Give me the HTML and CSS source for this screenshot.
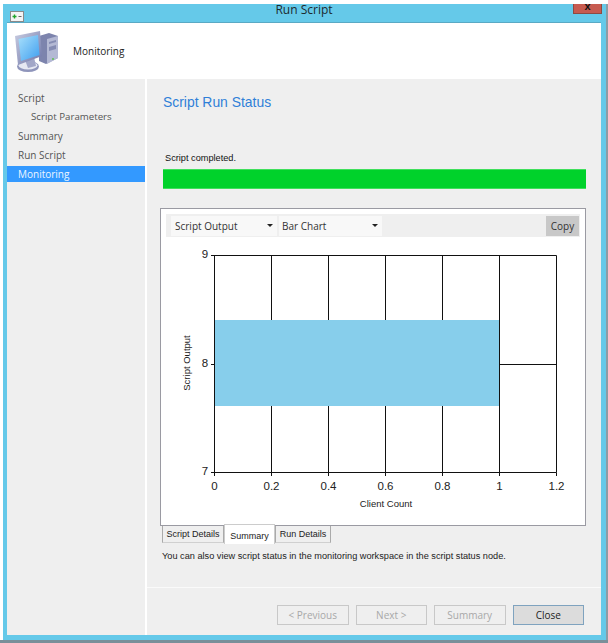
FILE: index.html

```html
<!DOCTYPE html>
<html lang="en">
<head>
  <meta charset="UTF-8">
  <title>Run Script</title>
  <link rel="stylesheet" href="styles.css">
</head>
<body>
  <div class="window">
    <div class="titlebar">
      <span class="app-icon">
        <svg width="14" height="11" viewBox="0 0 14 11">
          <rect x="0.5" y="0.5" width="13" height="10" fill="#f4f4f4" stroke="#8a8a8a"/>
          <path d="M2.500 5.500h4M4.500 3.500v4" stroke="#1fa52b" stroke-width="1.400"/>
          <path d="M8.500 5.500h3" stroke="#666" stroke-width="1"/>
        </svg>
      </span>
      <span class="title">Run Script</span>
      <span class="close-btn">x</span>
    </div>

    <div class="header">
      <svg class="computer" width="45" height="44" viewBox="0 0 45 44">
        <defs>
          <linearGradient id="screen" x1="0" y1="0" x2="1" y2="1">
            <stop offset="0" stop-color="#a9e0fb"/>
            <stop offset="1" stop-color="#3f9ff0"/>
          </linearGradient>
          <linearGradient id="bezel" x1="0" y1="0" x2="1" y2="1">
            <stop offset="0" stop-color="#c9cde2"/>
            <stop offset="1" stop-color="#6d74a6"/>
          </linearGradient>
        </defs>
        <path d="M24 6l10-3 9 3v22l-12 6-7-3z" fill="#7d84ad"/>
        <path d="M32 9l11-3v22l-11 6z" fill="#b4b9d4"/>
        <path d="M34 12l7-2v2l-7 2zM34 17l7-2v4l-7 2z" fill="#858cb3"/>
        <circle cx="38" cy="29" r="1" fill="#5cc04f"/>
        <ellipse cx="13" cy="36.500" rx="11" ry="5.500" fill="#8f95bb"/>
        <ellipse cx="13" cy="35.500" rx="9.500" ry="4" fill="#e6e8f2"/>
        <path d="M10 30l9-3 2 9-8 2z" fill="#a2a7c8"/>
        <path d="M0 6L25 1l2 25-24 9z" fill="url(#bezel)"/>
        <path d="M3.500 9L23 5l1.500 20L6 31z" fill="url(#screen)"/>
      </svg>
      <span class="header-text">Monitoring</span>
    </div>

    <div class="body-row">
      <nav class="sidebar">
        <div class="nav-item">Script</div>
        <div class="nav-item sub">Script Parameters</div>
        <div class="nav-item">Summary</div>
        <div class="nav-item">Run Script</div>
        <div class="nav-item active">Monitoring</div>
      </nav>

      <div class="main">
        <div class="content">
          <h1>Script Run Status</h1>
          <p class="status">Script completed.</p>
          <div class="progress"></div>

          <div class="panel">
            <div class="toolbar">
              <div class="select s1"><span>Script Output</span><i class="arrow"></i></div>
              <div class="select s2"><span>Bar Chart</span><i class="arrow"></i></div>
              <div class="copy">Copy</div>
            </div>
            <svg class="chart" width="423" height="285" viewBox="161 239 423 285">
              <rect x="214" y="320" width="285.500" height="86" fill="#87ceeb"/>
              <g stroke="#111" stroke-width="1" fill="none">
                <path d="M214.500 255.500V472.500M271.500 255.500V320M328.500 255.500V320M385.500 255.500V320M442.500 255.500V320M499.500 255.500V472.500M556.500 255.500V472.500"/>
                <path d="M271.500 406V472.500M328.500 406V472.500M385.500 406V472.500M442.500 406V472.500"/>
                <path d="M211 255.500H556.500M211 472.500H556.500M499.500 364.500H556.500M211 364.500H214"/>
                <path d="M214.500 472.500V476M271.500 472.500V476M328.500 472.500V476M385.500 472.500V476M442.500 472.500V476M499.500 472.500V476M556.500 472.500V476"/>
              </g>
              <g class="tick">
                <text x="205" y="258" text-anchor="middle">9</text>
                <text x="205" y="367" text-anchor="middle">8</text>
                <text x="205" y="475" text-anchor="middle">7</text>
                <text x="214.500" y="490" text-anchor="middle">0</text>
                <text x="271.500" y="490" text-anchor="middle">0.2</text>
                <text x="328.500" y="490" text-anchor="middle">0.4</text>
                <text x="385.500" y="490" text-anchor="middle">0.6</text>
                <text x="442.500" y="490" text-anchor="middle">0.8</text>
                <text x="499.500" y="490" text-anchor="middle">1</text>
                <text x="556.500" y="490" text-anchor="middle">1.2</text>
              </g>
              <text class="axis" x="386" y="507" text-anchor="middle">Client Count</text>
              <text class="axis" transform="translate(190 363) rotate(-90)" text-anchor="middle">Script Output</text>
            </svg>
          </div>

          <div class="tabs">
            <div class="tab t1">Script Details</div>
            <div class="tab t2 selected">Summary</div>
            <div class="tab t3">Run Details</div>
          </div>
          <p class="note">You can also view script status in the monitoring workspace in the script status node.</p>
        </div>

        <div class="footer">
          <button class="btn" disabled>&lt; Previous</button>
          <button class="btn" disabled>Next &gt;</button>
          <button class="btn" disabled>Summary</button>
          <button class="btn primary">Close</button>
        </div>
      </div>
    </div>
  </div>
  <div class="desktop-strip"></div>
</body>
</html>
```

FILE: styles.css

```css
html, body {
  margin: 0;
  padding: 0;
  background-color: #fff;
  overflow: hidden;
}
body {
  width: 608px;
  height: 643px;
  font-family: "Open Sans", sans-serif;
  color: #222;
}
.window {
  margin: 4px 0 0 3px;
  width: 605px;
  height: 636px;
  background-color: #65c9e9;
  box-sizing: border-box;
  padding: 0 5px 5px 4px;
  display: flex;
  flex-direction: column;
  border-right: 2px solid #8b9ca5;
}
.desktop-strip {
  height: 3px;
  background-color: #7a8f99;
}
.titlebar {
  height: 19px;
  flex: none;
  display: flex;
  align-items: flex-start;
  position: relative;
  border-bottom: 1px solid #5aa9c4;
  box-sizing: border-box;
}
.app-icon {
  margin: 1px 0 0 3px;
  height: 11px;
}
.title {
  position: absolute;
  left: 0;
  right: 0;
  top: -3px;
  text-align: center;
  font-size: 12px;
  line-height: 18px;
  color: #1c2a30;
}
.close-btn {
  position: absolute;
  right: -1px;
  top: 0;
  width: 29px;
  height: 10px;
  background-color: #c75b50;
  border: 1px solid #8f4a42;
  border-top: none;
  box-sizing: border-box;
  text-align: center;
  font: bold 11px/4px "Liberation Sans", sans-serif;
  color: #111;
}
.header {
  height: 56px;
  flex: none;
  background-color: #fff;
  display: flex;
  align-items: center;
  padding-left: 8px;
}
.computer {
  margin-top: 1px;
}
.header-text {
  margin-left: 13px;
  font-size: 10px;
  color: #222;
}
.body-row {
  flex: 1;
  display: flex;
  min-height: 0;
  background-color: #fff;
}
.sidebar {
  width: 138px;
  flex: none;
  margin-right: 2px;
  background-color: #efefef;
  padding-top: 10px;
  box-sizing: border-box;
}
.nav-item {
  height: 19px;
  line-height: 18px;
  font-size: 10px;
  color: #555;
  padding-left: 11px;
}
.nav-item.sub {
  padding-left: 24px;
  font-size: 9.700px;
}
.nav-item.active {
  height: 16px;
  margin-top: 1px;
  line-height: 16px;
  background-color: #3399ff;
  color: #eef6ff;
}
.main {
  flex: 1;
  display: flex;
  flex-direction: column;
  background-color: #efefef;
}
.content {
  flex: 1;
  padding-left: 13px;
  padding-right: 15px;
}
h1 {
  margin: 14px 0 0 3px;
  font: normal 13.900px/18px "Liberation Sans", sans-serif;
  color: #2f7fd8;
}
.status {
  margin: 40px 0 0 5px;
  font: 9.200px/14px "Liberation Sans", sans-serif;
  color: #111;
}
.progress {
  margin: 4px 0 0 3px;
  height: 20px;
  width: 423px;
  box-sizing: border-box;
  background-color: #00d22b;
  border-top: 1px solid #3fdf5c;
  border-bottom: 1px solid #3fdf5c;
}
.panel {
  margin-top: 19px;
  width: 426px;
  height: 318px;
  box-sizing: border-box;
  background-color: #fff;
  border: 1px solid #9a9aa2;
  padding: 5px;
}
.toolbar {
  width: 414px;
  height: 23px;
  background-color: #efefef;
  display: flex;
  align-items: center;
  padding-left: 5px;
  box-sizing: border-box;
  gap: 2px;
}
.select {
  height: 20px;
  background-color: #f8f8f8;
  display: flex;
  align-items: center;
  justify-content: space-between;
  font-size: 10px;
  color: #333;
  box-sizing: border-box;
  padding: 0 4px;
}
.s1 {
  width: 106px;
}
.s2 {
  width: 103px;
  padding-left: 3px;
}
.arrow {
  width: 0;
  height: 0;
  border-left: 3px solid transparent;
  border-right: 3px solid transparent;
  border-top: 3px solid #222;
}
.copy {
  margin-left: auto;
  margin-right: 1px;
  width: 33px;
  height: 20px;
  line-height: 20px;
  background-color: #c8c8c8;
  text-align: center;
  font-size: 10px;
  color: #333;
}
.chart {
  display: block;
  margin: 2px 0 0 -5px;
}
.tick text {
  font: 11.500px "Liberation Sans", sans-serif;
  fill: #222;
}
.axis {
  font: 9.500px "Liberation Sans", sans-serif;
  fill: #222;
}
.tabs {
  display: flex;
  align-items: flex-start;
  margin-left: 2px;
  margin-top: -2px;
  height: 20px;
}
.tab {
  box-sizing: border-box;
  text-align: center;
  font: 9px/16px "Liberation Sans", sans-serif;
  color: #222;
  background-color: #efefef;
  border: 1px solid #aaa;
  border-top: none;
  border-bottom-color: #d0d0d0;
  margin-top: 2px;
  height: 17px;
}
.t1 {
  width: 62px;
}
.t2 {
  width: 51px;
}
.t3 {
  width: 56px;
}
.tab.selected {
  background-color: #fff;
  border: 1px solid #ccc;
  border-bottom: none;
  margin-top: 0;
  height: 20px;
  line-height: 22px;
  position: relative;
}
.note {
  margin: 5px 0 0 2px;
  font: 9.200px/14px "Liberation Sans", sans-serif;
  color: #222;
  white-space: nowrap;
}
.footer {
  flex: none;
  height: 48px;
  border-top: 1px solid #fafafa;
  display: flex;
  justify-content: flex-end;
  gap: 7px;
  padding: 17px 17px 0 0;
  box-sizing: border-box;
}
.btn {
  width: 71.500px;
  height: 20px;
  padding: 0;
  box-sizing: border-box;
  background-color: #efefef;
  border: 1px solid #c8c8c8;
  font-family: "Open Sans", sans-serif;
  font-size: 10px;
  color: #a8a8a8;
}
.btn.primary {
  background-color: #dcdcdc;
  border: 1px solid #7fa3bf;
  color: #222;
}
```
